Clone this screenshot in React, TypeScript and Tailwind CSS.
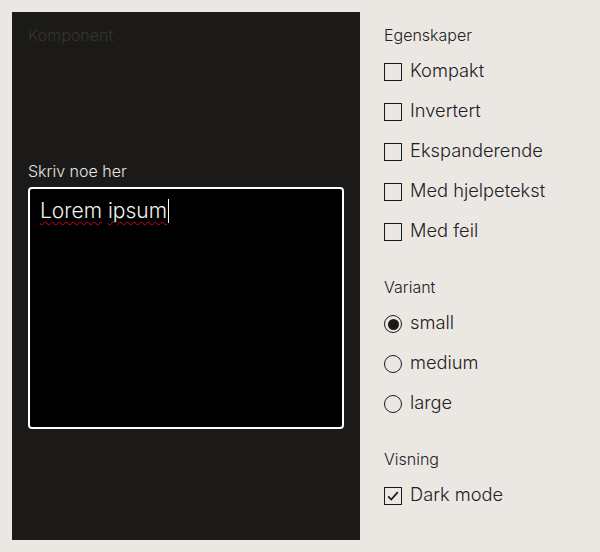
import { useState } from "react";

const checks = ["Kompakt", "Invertert", "Ekspanderende", "Med hjelpetekst", "Med feil"];
const variants = ["small", "medium", "large"];

const Box = ({ checked }: { checked?: boolean }) => (
  <span className="flex h-[18px] w-[18px] shrink-0 items-center justify-center border-[1.5px] border-[#1b1a19]">
    {checked && (
      <svg viewBox="0 0 16 16" className="h-[14px] w-[14px]" fill="none" stroke="#1b1a19" strokeWidth="2">
        <path d="M2.5 8.5 L6 12 L13.5 3.5" />
      </svg>
    )}
  </span>
);

const Radio = ({ checked }: { checked?: boolean }) => (
  <span className="flex h-[18px] w-[18px] shrink-0 items-center justify-center rounded-full border-[1.5px] border-[#1b1a19]">
    {checked && <span className="h-[11px] w-[11px] rounded-full bg-[#1b1a19]" />}
  </span>
);

export default function App() {
  const [variant] = useState("small");

  return (
    <div className="flex h-[552px] w-[600px] bg-[#ebe8e4] p-3 font-['Inter',sans-serif] font-light">
      {/* component preview */}
      <div className="flex w-[348px] shrink-0 flex-col bg-[#1b1a19] px-4 pt-[11px]">
        <p className="text-[16px] leading-6 text-[#36342f]">Komponent</p>

        <label className="mt-[112px] text-[16px] leading-6 text-[#e8e5e1]">Skriv noe her</label>
        <div className="mt-1 h-[242px] w-full rounded-[4px] border-2 border-white bg-black px-[10px] pt-[8px]">
          <p className="flex items-center text-[21px] leading-7 text-[#f3f1ee]">
            <span className="underline decoration-[#d0021b] decoration-wavy decoration-1 underline-offset-[3px]">Lorem</span>
            <span>&nbsp;</span>
            <span className="underline decoration-[#d0021b] decoration-wavy decoration-1 underline-offset-[3px]">ipsum</span>
            <span className="ml-px h-6 w-px bg-white" />
          </p>
        </div>
      </div>

      {/* controls */}
      <div className="flex flex-col pl-6 pt-[11px] text-[#23211f]">
        <p className="text-[16px] leading-6">Egenskaper</p>
        <div className="mt-[5px] flex flex-col">
          {checks.map((c) => (
            <div key={c} className="flex h-10 items-center gap-2 text-[18.3px]">
              <Box />
              <span className="mb-[3px]">{c}</span>
            </div>
          ))}
        </div>

        <p className="mt-[23px] text-[16px] leading-6">Variant</p>
        <div className="mt-[5px] flex flex-col">
          {variants.map((v) => (
            <div key={v} className="flex h-10 items-center gap-2 text-[18.3px]">
              <Radio checked={v === variant} />
              <span className="mb-[3px]">{v}</span>
            </div>
          ))}
        </div>

        <p className="mt-[23px] text-[16px] leading-6">Visning</p>
        <div className="mt-[5px] flex h-10 items-center gap-2 text-[18.3px]">
          <Box checked />
          <span className="mb-[3px]">Dark mode</span>
        </div>
      </div>
    </div>
  );
}
